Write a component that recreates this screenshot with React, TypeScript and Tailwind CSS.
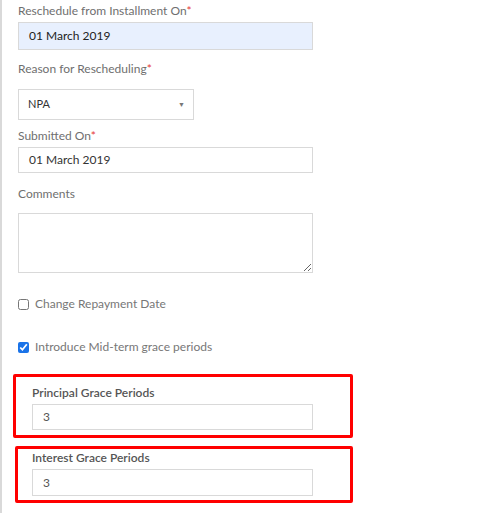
export default function App() {
  return (
    <div className="min-h-[513px] w-[484px] bg-white font-['Lato','Liberation_Sans',sans-serif]">
      <div className="min-h-[513px] border-l-2 border-[#d9d9d9] pl-4 pt-[2px]">
        <Label text="Reschedule from Installment On" required />
        <div className="mt-[2px] flex h-[28px] w-[295px] items-center border border-[#d9d9d9] bg-[#e8f0fe] px-[10px] text-[12px] text-[#222]">
          01 March 2019
        </div>

        <div className="mt-[10px]">
          <Label text="Reason for Rescheduling" required />
        </div>
        <div className="mt-[11px] flex h-[31px] w-[176px] items-center justify-between border border-[#d9d9d9] pl-[9px] pr-[8px] text-[11px] text-[#333]">
          <span>NPA</span>
          <span className="text-[7px] text-[#777]">▼</span>
        </div>

        <div className="mt-[7px]">
          <Label text="Submitted On" required />
        </div>
        <div className="mt-[2px] flex h-[26px] w-[295px] items-center border border-[#d9d9d9] px-[10px] text-[12px] text-[#333]">
          01 March 2019
        </div>

        <div className="mt-[12px]">
          <Label text="Comments" />
        </div>
        <textarea
          className="mt-[10px] block h-[60px] w-[295px] border border-[#d9d9d9] outline-none"
          defaultValue=""
        />

        <label className="mt-[22px] flex h-[18px] items-center gap-[6px] text-[12px] text-[#777]">
          <input type="checkbox" className="m-0 h-[11px] w-[11px]" />
          Change Repayment Date
        </label>

        <label className="mt-[25px] flex h-[18px] items-center gap-[6px] text-[12px] text-[#777]">
          <input type="checkbox" defaultChecked className="m-0 h-[11px] w-[11px] accent-[#1a73e8]" />
          Introduce Mid-term grace periods
        </label>

        <div className="-ml-[5px] mt-[18px] w-[340px] rounded-[2px] border-[3px] border-[#ff0000] pb-[5px] pl-4 pt-[7px]">
          <div className="text-[12px] font-semibold leading-[18px] text-[#555]">Principal Grace Periods</div>
          <div className="mt-[2px] flex h-[26px] w-[281px] items-center border border-[#d9d9d9] px-[10px] text-[12px] text-[#555]">
            3
          </div>
        </div>

        <div className="-ml-[3px] mt-[8px] w-[338px] rounded-[2px] border-[3px] border-[#ff0000] pb-[4px] pl-[14px]">
          <div className="text-[12px] font-semibold leading-[18px] text-[#555]">Interest Grace Periods</div>
          <div className="mt-[2px] flex h-[27px] w-[281px] items-center border border-[#d9d9d9] px-[10px] text-[12px] text-[#555]">
            3
          </div>
        </div>
      </div>
    </div>
  );
}

function Label({ text, required }: { text: string; required?: boolean }) {
  return (
    <div className="text-[12px] leading-[18px] text-[#6f6f6f]">
      {text}
      {required && <span className="text-[#e53935]">*</span>}
    </div>
  );
}
